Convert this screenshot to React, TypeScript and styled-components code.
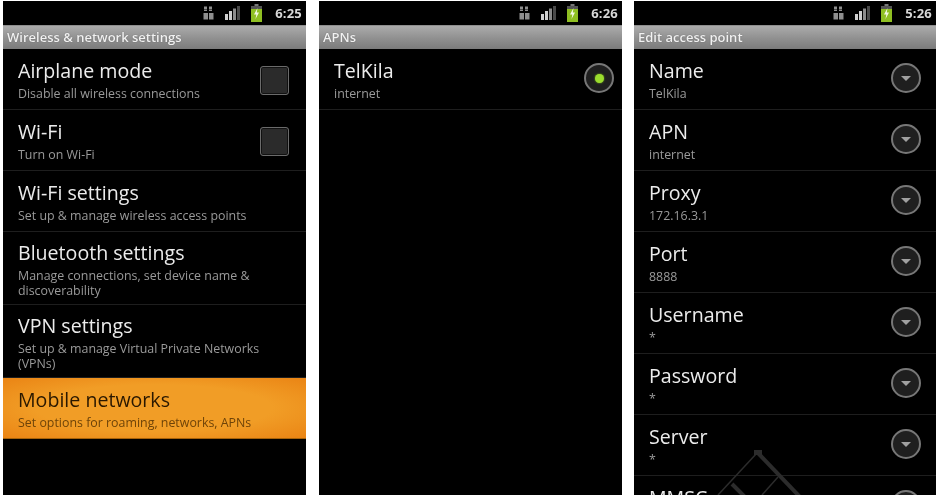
import React from 'react';
import styled, { createGlobalStyle } from 'styled-components';

const GlobalStyle = createGlobalStyle`
  html, body {
    margin: 0;
    padding: 0;
    background: #fff;
    font-family: "Open Sans", "Noto Sans", sans-serif;
  }
`;

const Page = styled.div`
  display: flex;
  width: 936px;
  height: 495px;
  padding: 1px 0 0 3px;
  box-sizing: border-box;
  overflow: hidden;
  background: #fff;
`;

const Panel = styled.section<{ $width: number; $gap: number }>`
  position: relative;
  display: flex;
  flex-direction: column;
  flex: none;
  width: ${({ $width }) => $width}px;
  margin-left: ${({ $gap }) => $gap}px;
  height: 494px;
  overflow: hidden;
  background: #000;
  filter: blur(0.5px);
`;

const StatusBar = styled.div`
  display: flex;
  align-items: center;
  justify-content: flex-end;
  flex: none;
  height: 24px;
  padding-right: 4px;
  color: #d8d8d8;
`;

const StatusIcons = styled.div`
  display: flex;
  align-items: center;
  gap: 11px;
  margin-right: 13px;
`;

const Clock = styled.span`
  font-size: 13px;
  font-weight: 700;
  letter-spacing: 0.2px;
`;

const TitleBar = styled.div`
  flex: none;
  height: 24px;
  padding-left: 4px;
  box-sizing: border-box;
  border-top: 1px solid #8e8e8e;
  background: linear-gradient(#ababab, #8d8d8d 60%, #7b7b7b);
  color: #f2f2f2;
  font-size: 13px;
  font-weight: 600;
  line-height: 23px;
  text-shadow: 0 0 1px #555;
`;

const Row = styled.div<{ $active?: boolean; $tall?: boolean; $inset: number }>`
  display: flex;
  align-items: center;
  justify-content: space-between;
  flex: none;
  min-height: 61px;
  padding: ${({ $tall }) => ($tall ? '9px' : '10px')} ${({ $inset }) => $inset}px
    ${({ $tall }) => ($tall ? '6px' : '8px')} 15px;
  box-sizing: border-box;
  border-bottom: 1px solid ${({ $active }) => ($active ? '#a86208' : '#1e1e1e')};
  background: ${({ $active }) =>
    $active ? 'radial-gradient(ellipse at center, #f19d26 55%, #ea8414 100%)' : 'transparent'};
`;

const RowText = styled.div`
  display: flex;
  flex-direction: column;
  min-width: 0;
`;

const RowTitle = styled.div<{ $active?: boolean }>`
  color: ${({ $active }) => ($active ? '#2a1800' : '#ececec')};
  font-size: 19.6px;
  line-height: 23px;
  margin-bottom: 4px;
`;

const RowSub = styled.div<{ $active?: boolean }>`
  min-height: 15px;
  color: ${({ $active }) => ($active ? '#6e4308' : '#9a9a9a')};
  font-size: 12.4px;
  line-height: 15px;
`;

const Checkbox = styled.div`
  flex: none;
  width: 29px;
  height: 29px;
  box-sizing: border-box;
  border: 1px solid #6b6b6b;
  border-radius: 3px;
  background: #2b2b2b;
  box-shadow: inset 0 0 0 1px #111;
`;

const Ring = styled.div`
  display: flex;
  align-items: center;
  justify-content: center;
  flex: none;
  width: 30px;
  height: 30px;
  margin-bottom: 4px;
  box-sizing: border-box;
  border: 2px solid #777;
  border-radius: 50%;
  background: #1f1f1f;
`;

const RadioDot = styled.div`
  width: 9px;
  height: 9px;
  border-radius: 50%;
  background: #9bdc2e;
  box-shadow: 0 0 2px #7fc01c;
`;

const Caret = styled.div`
  width: 0;
  height: 0;
  border-left: 5px solid transparent;
  border-right: 5px solid transparent;
  border-top: 5px solid #a0a0a0;
  margin-top: 1px;
`;

const Watermark = styled.svg`
  position: absolute;
  left: 60px;
  top: 440px;
`;

const NetworkIcon = () => (
  <svg width="11" height="14" viewBox="0 0 11 14">
    <g fill="#8f8f8f">
      <rect x="1" y="0.5" width="3" height="2.5" />
      <rect x="6" y="0.5" width="3" height="2.5" />
      <rect x="1" y="3.5" width="3" height="1.5" />
      <rect x="6" y="3.5" width="3" height="1.5" />
      <rect x="0.5" y="7" width="4.5" height="6.5" />
      <rect x="6" y="7" width="4.5" height="6.5" />
    </g>
  </svg>
);

const SignalIcon = () => (
  <svg width="15" height="14" viewBox="0 0 15 14">
    <rect x="0" y="8" width="3" height="6" fill="#cfcfcf" />
    <rect x="4" y="5" width="3" height="9" fill="#cfcfcf" />
    <rect x="8" y="2.5" width="3" height="11.5" fill="#8c8c8c" />
    <rect x="12" y="0" width="3" height="14" fill="#4a4a4a" />
  </svg>
);

const BatteryIcon = () => (
  <svg width="11" height="18" viewBox="0 0 11 18">
    <rect x="3.5" y="0" width="4" height="2" fill="#777" />
    <rect x="0" y="2" width="11" height="4" fill="#555" />
    <rect x="0" y="5" width="11" height="13" fill="#8fbf22" />
    <path d="M6.5 4 L3 10.5 H5.3 L4.5 15 L8 8.5 H5.8 Z" fill="#f4f8e4" />
  </svg>
);

type Control = 'check' | 'radio' | 'caret';

type Item = {
  title: string;
  sub: string;
  control?: Control;
  active?: boolean;
  tall?: boolean;
};

const wireless: Item[] = [
  { title: 'Airplane mode', sub: 'Disable all wireless connections', control: 'check' },
  { title: 'Wi-Fi', sub: 'Turn on Wi-Fi', control: 'check' },
  { title: 'Wi-Fi settings', sub: 'Set up & manage wireless access points' },
  { title: 'Bluetooth settings', sub: 'Manage connections, set device name & discoverability', tall: true },
  { title: 'VPN settings', sub: 'Set up & manage Virtual Private Networks (VPNs)', tall: true },
  { title: 'Mobile networks', sub: 'Set options for roaming, networks, APNs', active: true },
];

const apns: Item[] = [{ title: 'TelKila', sub: 'internet', control: 'radio' }];

const accessPoint: Item[] = [
  { title: 'Name', sub: 'TelKila', control: 'caret' },
  { title: 'APN', sub: 'internet', control: 'caret' },
  { title: 'Proxy', sub: '172.16.3.1', control: 'caret' },
  { title: 'Port', sub: '8888', control: 'caret' },
  { title: 'Username', sub: '*', control: 'caret' },
  { title: 'Password', sub: '*', control: 'caret' },
  { title: 'Server', sub: '*', control: 'caret' },
  { title: 'MMSC', sub: '', control: 'caret' },
];

const renderControl = (control?: Control) => {
  if (control === 'check') return <Checkbox />;
  if (control === 'radio') {
    return (
      <Ring>
        <RadioDot />
      </Ring>
    );
  }
  if (control === 'caret') {
    return (
      <Ring>
        <Caret />
      </Ring>
    );
  }
  return null;
};

const Screen = ({
  time,
  title,
  items,
  width,
  gap,
  inset,
  children,
}: {
  time: string;
  title: string;
  items: Item[];
  width: number;
  gap: number;
  inset: number;
  children?: React.ReactNode;
}) => (
  <Panel $width={width} $gap={gap}>
    <StatusBar>
      <StatusIcons>
        <NetworkIcon />
        <SignalIcon />
        <BatteryIcon />
      </StatusIcons>
      <Clock>{time}</Clock>
    </StatusBar>
    <TitleBar>{title}</TitleBar>
    {items.map(item => (
      <Row key={item.title} $active={item.active} $tall={item.tall} $inset={inset}>
        <RowText>
          <RowTitle $active={item.active}>{item.title}</RowTitle>
          <RowSub $active={item.active}>{item.sub}</RowSub>
        </RowText>
        {renderControl(item.control)}
      </Row>
    ))}
    {children}
  </Panel>
);

const App = () => (
  <Page>
    <GlobalStyle />
    <Screen time="6:25" title="Wireless & network settings" items={wireless} width={303} gap={0} inset={17} />
    <Screen time="6:26" title="APNs" items={apns} width={303} gap={13} inset={8} />
    <Screen time="5:26" title="Edit access point" items={accessPoint} width={302} gap={12} inset={15}>
      <Watermark width="140" height="60" viewBox="0 0 140 60">
        <g fill="none" stroke="#2c2c2c">
          <path d="M64 12 L106 56" strokeWidth="4" />
          <path d="M63 12 L24 54" strokeWidth="1.5" />
          <path d="M38 43 L51 56" strokeWidth="4" />
          <path d="M84 36 L68 54" strokeWidth="1.5" />
        </g>
        <rect x="60" y="9" width="8" height="5" fill="#2c2c2c" />
      </Watermark>
    </Screen>
  </Page>
);

export default App;
